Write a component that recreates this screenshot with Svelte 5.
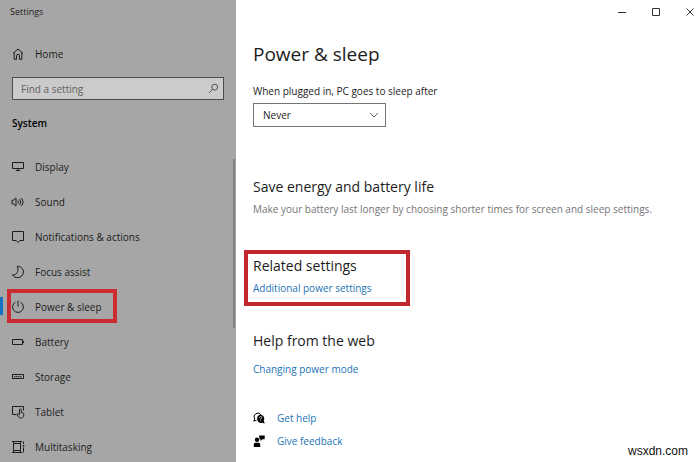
<script>
  let search = '';
  let sleepAfter = 'Never';
  let current = 'Power & sleep';

  const sleepOptions = ['10 minutes', '30 minutes', '1 hour', '5 hours', 'Never'];

  const pages = [
    { name: 'Display', icon: 'display' },
    { name: 'Sound', icon: 'sound' },
    { name: 'Notifications & actions', icon: 'notifications' },
    { name: 'Focus assist', icon: 'focus' },
    { name: 'Power & sleep', icon: 'power', marked: true },
    { name: 'Battery', icon: 'battery' },
    { name: 'Storage', icon: 'storage' },
    { name: 'Tablet', icon: 'tablet' },
    { name: 'Multitasking', icon: 'multitasking' },
  ];
</script>

<div class="window">
  <aside class="sidebar">
    <div class="app-name">Settings</div>

    <a class="home" href="#home">
      <svg class="icon" viewBox="0 0 14 14" aria-hidden="true">
        <path d="M2 6.500 7 2l5 4.500M3.200 5.500v6.800h2.300V8.800a1.500 1.500 0 0 1 3 0v3.500h2.300V5.500" />
      </svg>
      <span>Home</span>
    </a>

    <div class="search">
      <input type="text" bind:value={search} placeholder="Find a setting" aria-label="Find a setting" />
      <svg class="search-icon" viewBox="0 0 12 12" aria-hidden="true">
        <circle cx="7.3" cy="4.5" r="3.2" />
        <path d="M5 6.9 1.2 10.8" />
      </svg>
    </div>

    <h2 class="group">System</h2>

    <nav>
      <ul>
        {#each pages as page}
          <li class:current={page.name === current} class:marked={page.marked}>
            <a href="#{page.icon}" on:click={() => (current = page.name)}>
              <svg class="icon" viewBox="0 0 14 14" aria-hidden="true">
                {#if page.icon === 'display'}
                  <path d="M1.500 2.500h11v6h-11zM7 8.500v2M5 10.500h4" />
                {:else if page.icon === 'sound'}
                  <path d="M1 5.200h1.600l2.400-2.300v8.200L2.600 8.800H1zM6.900 5.500a2.400 2.400 0 0 1 0 3M8.600 4.200a4.300 4.300 0 0 1 0 5.600M10.300 3a6.200 6.200 0 0 1 0 8" />
                {:else if page.icon === 'notifications'}
                  <path d="M1.500 1.500h11v9H8.800L7 12.500l-1.800-2H1.500z" />
                {:else if page.icon === 'focus'}
                  <path d="M6.200 1.200c4 .2 6.200 2.800 6.200 5.800 0 3.200-2.500 5.700-5.700 5.700-2.300 0-4.100-1-5.200-2.800 3.900.6 6.900-3.600 4.700-8.700z" />
                {:else if page.icon === 'power'}
                  <path d="M7 .8v5.700M4.500 2.200a5.400 5.400 0 1 0 5 0" />
                {:else if page.icon === 'battery'}
                  <path d="M1.500 4.500h10v5h-10zM12.500 6v2" />
                {:else if page.icon === 'storage'}
                  <path d="M1.500 4.500h11v4h-11z" />
                  <path d="M3 6.700h8" stroke-dasharray="1.500 .5" />
                {:else if page.icon === 'tablet'}
                  <path d="M5.500 9.500h-4v-8h11v4" />
                  <path d="M8.500 9.500V4.800a.9.9 0 0 1 1.800 0v2.700l1.700.5c.7.200 1 .7.9 1.300l-.5 2.200c-.3 1-1 1.500-2 1.500H9.500c-.7 0-1.300-.3-1.700-.9L6 9.600c.6-.9 1.700-.8 2.500 0z" />
                {:else}
                  <path d="M2.500 3.500h7v7h-7zM1 1.500h10M1 12.500h10M2.500 1.500v2M9.500 1.500v2M2.500 10.500v2M9.500 10.500v2M12.500 1.500V4M12.500 7.500v5" />
                  <path d="M11.700 5.800h1.600" stroke-width="1.600" />
                {/if}
              </svg>
              <span>{page.name}</span>
            </a>
          </li>
        {/each}
      </ul>
    </nav>

    <div class="scrollbar"></div>
  </aside>

  <main>
    <div class="controls">
      <button aria-label="Minimize">
        <svg viewBox="0 0 10 10"><path d="M1 5.500h8" /></svg>
      </button>
      <button aria-label="Maximize">
        <svg viewBox="0 0 10 10"><path d="M1.500 1.500h7v7h-7z" /></svg>
      </button>
      <button aria-label="Close">
        <svg viewBox="0 0 10 10"><path d="m1.500 1.500 7 7M8.500 1.500l-7 7" /></svg>
      </button>
    </div>

    <div class="content">
      <h1>Power &amp; sleep</h1>

      <label for="sleep-after">When plugged in, PC goes to sleep after</label>
      <div class="dropdown">
        <select id="sleep-after" bind:value={sleepAfter}>
          {#each sleepOptions as option}
            <option value={option}>{option}</option>
          {/each}
        </select>
        <svg class="chevron" viewBox="0 0 10 6" aria-hidden="true"><path d="m1 1 4 4 4-4" /></svg>
      </div>

      <section class="energy">
        <h2>Save energy and battery life</h2>
        <p>Make your battery last longer by choosing shorter times for screen and sleep settings.</p>
      </section>

      <section class="related">
        <h2>Related settings</h2>
        <a href="#additional">Additional power settings</a>
      </section>

      <section class="web">
        <h2>Help from the web</h2>
        <a href="#mode">Changing power mode</a>
      </section>

      <div class="support">
        <a href="#help">
          <svg viewBox="0 0 12 12" aria-hidden="true">
            <path class="line" d="M3.500 8.200.8 9.200l.8-2.300A3.600 3.600 0 1 1 8 3" />
            <path d="M7.500 2.800a3.800 3.800 0 0 1 3.300 5.700l.9 3-2.700-.7a3.900 3.900 0 1 1-1.500-8z" />
            <path class="mark" d="M6.400 5.700c0-1.600 2.400-1.500 2.400 0 0 .9-1.200.9-1.200 1.900M7.600 8.400v.8" />
          </svg>
          <span>Get help</span>
        </a>
        <a href="#feedback">
          <svg viewBox="0 0 12 12" aria-hidden="true">
            <circle cx="4" cy="4.800" r="2.200" />
            <path d="M.8 12V9.500c0-1 .7-1.700 1.700-1.700h3c1 0 1.700.7 1.700 1.700V12zM6 .5h5.700v3.800H9.500L7.600 6V4.300H6.500z" />
          </svg>
          <span>Give feedback</span>
        </a>
      </div>
    </div>
  </main>

  <div class="watermark">wsxdn.com</div>
</div>

<style>
  :global(body) {
    background: #fff;
  }
  .window {
    position: relative;
    display: flex;
    height: 100vh;
    overflow: hidden;
    font-family: 'Open Sans', 'Noto Sans', sans-serif;
    font-size: 10px;
    line-height: 16px;
    color: #1c1c1c;
  }
  h1,
  h2,
  p,
  ul {
    margin: 0;
    padding: 0;
    font-weight: 400;
  }
  a {
    color: #2274b5;
    text-decoration: none;
  }
  svg {
    fill: none;
    stroke: currentColor;
    stroke-width: 1;
    flex: none;
  }

  .sidebar {
    position: relative;
    flex: none;
    width: 236px;
    background: #a6a6a6;
  }
  .app-name {
    padding: 4px 10px;
    font-size: 9px;
  }
  .icon {
    width: 14px;
    height: 14px;
  }
  .home {
    display: flex;
    align-items: center;
    gap: 10px;
    margin-top: 22px;
    padding: 0 11px;
    color: inherit;
  }
  .search {
    position: relative;
    margin: 15px 12px 0;
  }
  .search input {
    display: block;
    box-sizing: border-box;
    width: 100%;
    height: 23px;
    padding: 0 28px 0 8px;
    border: 1px solid #4c4c4c;
    border-radius: 0;
    background: #cbcbcb;
    color: #1c1c1c;
    font: inherit;
    outline: none;
  }
  .search input::placeholder {
    color: #606060;
    opacity: 1;
  }
  .search-icon {
    position: absolute;
    right: 5px;
    top: 6px;
    width: 11px;
    height: 11px;
    color: #444;
  }
  .group {
    margin-top: 15px;
    padding: 0 12px;
    font-size: 10px;
    font-weight: 600;
    color: #000;
  }
  nav {
    margin-top: 18px;
  }
  ul {
    list-style: none;
  }
  li {
    position: relative;
  }
  li a {
    display: flex;
    align-items: center;
    gap: 10px;
    height: 35px;
    padding: 0 11px;
    color: inherit;
  }
  .current::before {
    content: '';
    position: absolute;
    left: 0;
    top: 8px;
    width: 3px;
    height: 18px;
    background: #1670c4;
  }
  .marked::after {
    content: '';
    position: absolute;
    left: 7px;
    top: 0;
    box-sizing: border-box;
    width: 110px;
    height: 34px;
    border: 4px solid #cb2c31;
    pointer-events: none;
  }
  .scrollbar {
    position: absolute;
    right: 1px;
    top: 159px;
    width: 2px;
    height: 169px;
    background: #828282;
  }

  main {
    flex: 1;
    min-width: 0;
    background: #fff;
  }
  .controls {
    display: flex;
    justify-content: flex-end;
    gap: 24px;
    padding-right: 5px;
  }
  .controls button {
    display: flex;
    align-items: center;
    width: 10px;
    height: 24px;
    padding: 0;
    border: none;
    background: none;
    color: #333;
  }
  .controls svg {
    width: 10px;
    height: 10px;
  }
  .content {
    padding: 16px 17px 0;
  }
  h1 {
    font-size: 19px;
    line-height: 28px;
  }
  label {
    display: block;
    margin-top: 15px;
  }
  .dropdown {
    position: relative;
    width: 133px;
    margin-top: 4px;
  }
  select {
    appearance: none;
    display: block;
    box-sizing: border-box;
    width: 100%;
    height: 24px;
    padding: 0 24px 0 9px;
    border: 1px solid #767676;
    border-radius: 0;
    background: #fff;
    color: inherit;
    font: inherit;
  }
  .chevron {
    position: absolute;
    right: 7px;
    top: 9px;
    width: 10px;
    height: 6px;
    color: #666;
    pointer-events: none;
  }
  section h2 {
    font-size: 14px;
    line-height: 20px;
  }
  section a {
    display: block;
  }
  .energy {
    margin-top: 50px;
  }
  .energy p {
    margin-top: 4px;
    color: #757575;
  }
  .related {
    box-sizing: border-box;
    width: 166px;
    margin: 33px 0 0 -9px;
    padding: 2px 5px 6px;
    border: 4px solid #c1272d;
  }
  .related a {
    margin-top: 4px;
  }
  .web {
    margin-top: 25px;
  }
  .web a {
    margin-top: 10px;
  }
  .support {
    display: flex;
    flex-direction: column;
    gap: 7px;
    margin-top: 33px;
  }
  .support a {
    display: flex;
    align-items: center;
    gap: 12px;
  }
  .support svg {
    width: 12px;
    height: 12px;
    fill: #000;
    stroke: none;
  }
  .support .line {
    fill: none;
    stroke: #000;
  }
  .support .mark {
    fill: none;
    stroke: #fff;
    stroke-width: 0.8;
  }
  .watermark {
    position: absolute;
    right: 12px;
    bottom: 3px;
    font-family: 'Liberation Sans', Arial, sans-serif;
    font-size: 12px;
    color: #111;
  }
</style>
